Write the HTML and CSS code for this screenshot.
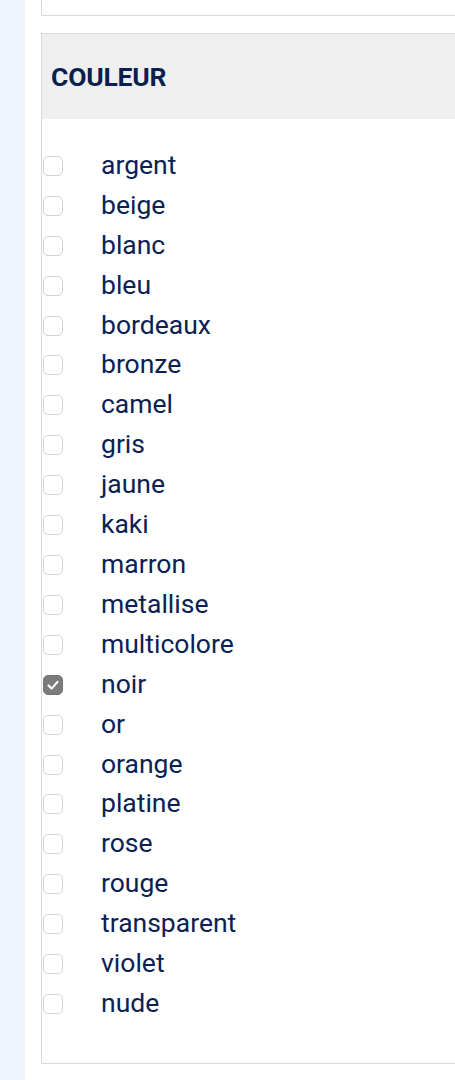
FILE: index.html
```html
<!DOCTYPE html>
<html lang="fr">
<head>
<meta charset="utf-8">
<title>Couleur</title>
<link rel="stylesheet" href="styles.css">
</head>
<body>
<div class="page">
  <aside class="strip"></aside>
  <main class="main">
    <div class="prev-box"></div>
    <section class="filter">
      <header class="filter-head"><h2 class="filter-title">COULEUR</h2></header>
      <ul class="options">
        <li class="opt"><span class="box"></span><span class="label">argent</span></li>
        <li class="opt"><span class="box"></span><span class="label">beige</span></li>
        <li class="opt"><span class="box"></span><span class="label">blanc</span></li>
        <li class="opt"><span class="box"></span><span class="label">bleu</span></li>
        <li class="opt"><span class="box"></span><span class="label">bordeaux</span></li>
        <li class="opt"><span class="box"></span><span class="label">bronze</span></li>
        <li class="opt"><span class="box"></span><span class="label">camel</span></li>
        <li class="opt"><span class="box"></span><span class="label">gris</span></li>
        <li class="opt"><span class="box"></span><span class="label">jaune</span></li>
        <li class="opt"><span class="box"></span><span class="label">kaki</span></li>
        <li class="opt"><span class="box"></span><span class="label">marron</span></li>
        <li class="opt"><span class="box"></span><span class="label">metallise</span></li>
        <li class="opt"><span class="box"></span><span class="label">multicolore</span></li>
        <li class="opt"><span class="box checked"><svg viewBox="0 0 20 20" class="tick"><path d="M5 10.5 L8.5 14 L15 6.5" fill="none" stroke="#fff" stroke-width="2.4" stroke-linecap="round" stroke-linejoin="round"/></svg></span><span class="label">noir</span></li>
        <li class="opt"><span class="box"></span><span class="label">or</span></li>
        <li class="opt"><span class="box"></span><span class="label">orange</span></li>
        <li class="opt"><span class="box"></span><span class="label">platine</span></li>
        <li class="opt"><span class="box"></span><span class="label">rose</span></li>
        <li class="opt"><span class="box"></span><span class="label">rouge</span></li>
        <li class="opt"><span class="box"></span><span class="label">transparent</span></li>
        <li class="opt"><span class="box"></span><span class="label">violet</span></li>
        <li class="opt"><span class="box"></span><span class="label">nude</span></li>
      </ul>
    </section>
  </main>
</div>
</body>
</html>
```
FILE: styles.css
```css
html, body {
  margin: 0;
  padding: 0;
  overflow: hidden;
  background: #ffffff;
}
body {
  font-family: Roboto, "Liberation Sans", Arial, sans-serif;
  color: #0b2153;
}
.page {
  display: flex;
  min-height: 1080px;
}
.strip {
  width: 25px;
  flex: 0 0 25px;
  background: #eef4fc;
}
.main {
  flex: 1 1 auto;
  padding-left: 16px;
}
.prev-box {
  height: 15px;
  border-left: 1px solid #d9d9d9;
  border-bottom: 1px solid #d9d9d9;
}
.filter {
  margin-top: 17px;
  border: 1px solid #d9d9d9;
  border-right: none;
}
.filter-head {
  height: 85px;
  background: #efefef;
  display: flex;
  align-items: center;
  padding-left: 9px;
}
.filter-title {
  margin: 0;
  font-size: 26.5px;
  font-weight: 700;
  color: #0a1f4e;
  letter-spacing: -0.2px;
}
.options {
  list-style: none;
  margin: 0;
  padding: 26px 0 40px 0;
}
.opt {
  height: 39.92px;
  display: flex;
  align-items: center;
}
.box {
  width: 18px;
  height: 18px;
  margin-left: 1px;
  margin-top: 2px;
  border: 1px solid #d4d4d4;
  border-radius: 5px;
  background: #fff;
  box-sizing: content-box;
  display: inline-flex;
  align-items: center;
  justify-content: center;
  flex: 0 0 auto;
}
.box.checked {
  background: #7b7b7b;
  border-color: #767676;
}
.tick {
  width: 18px;
  height: 18px;
}
.label {
  margin-left: 38px;
  font-size: 26.5px;
  line-height: 40px;
  color: #0b2153;
}
```
